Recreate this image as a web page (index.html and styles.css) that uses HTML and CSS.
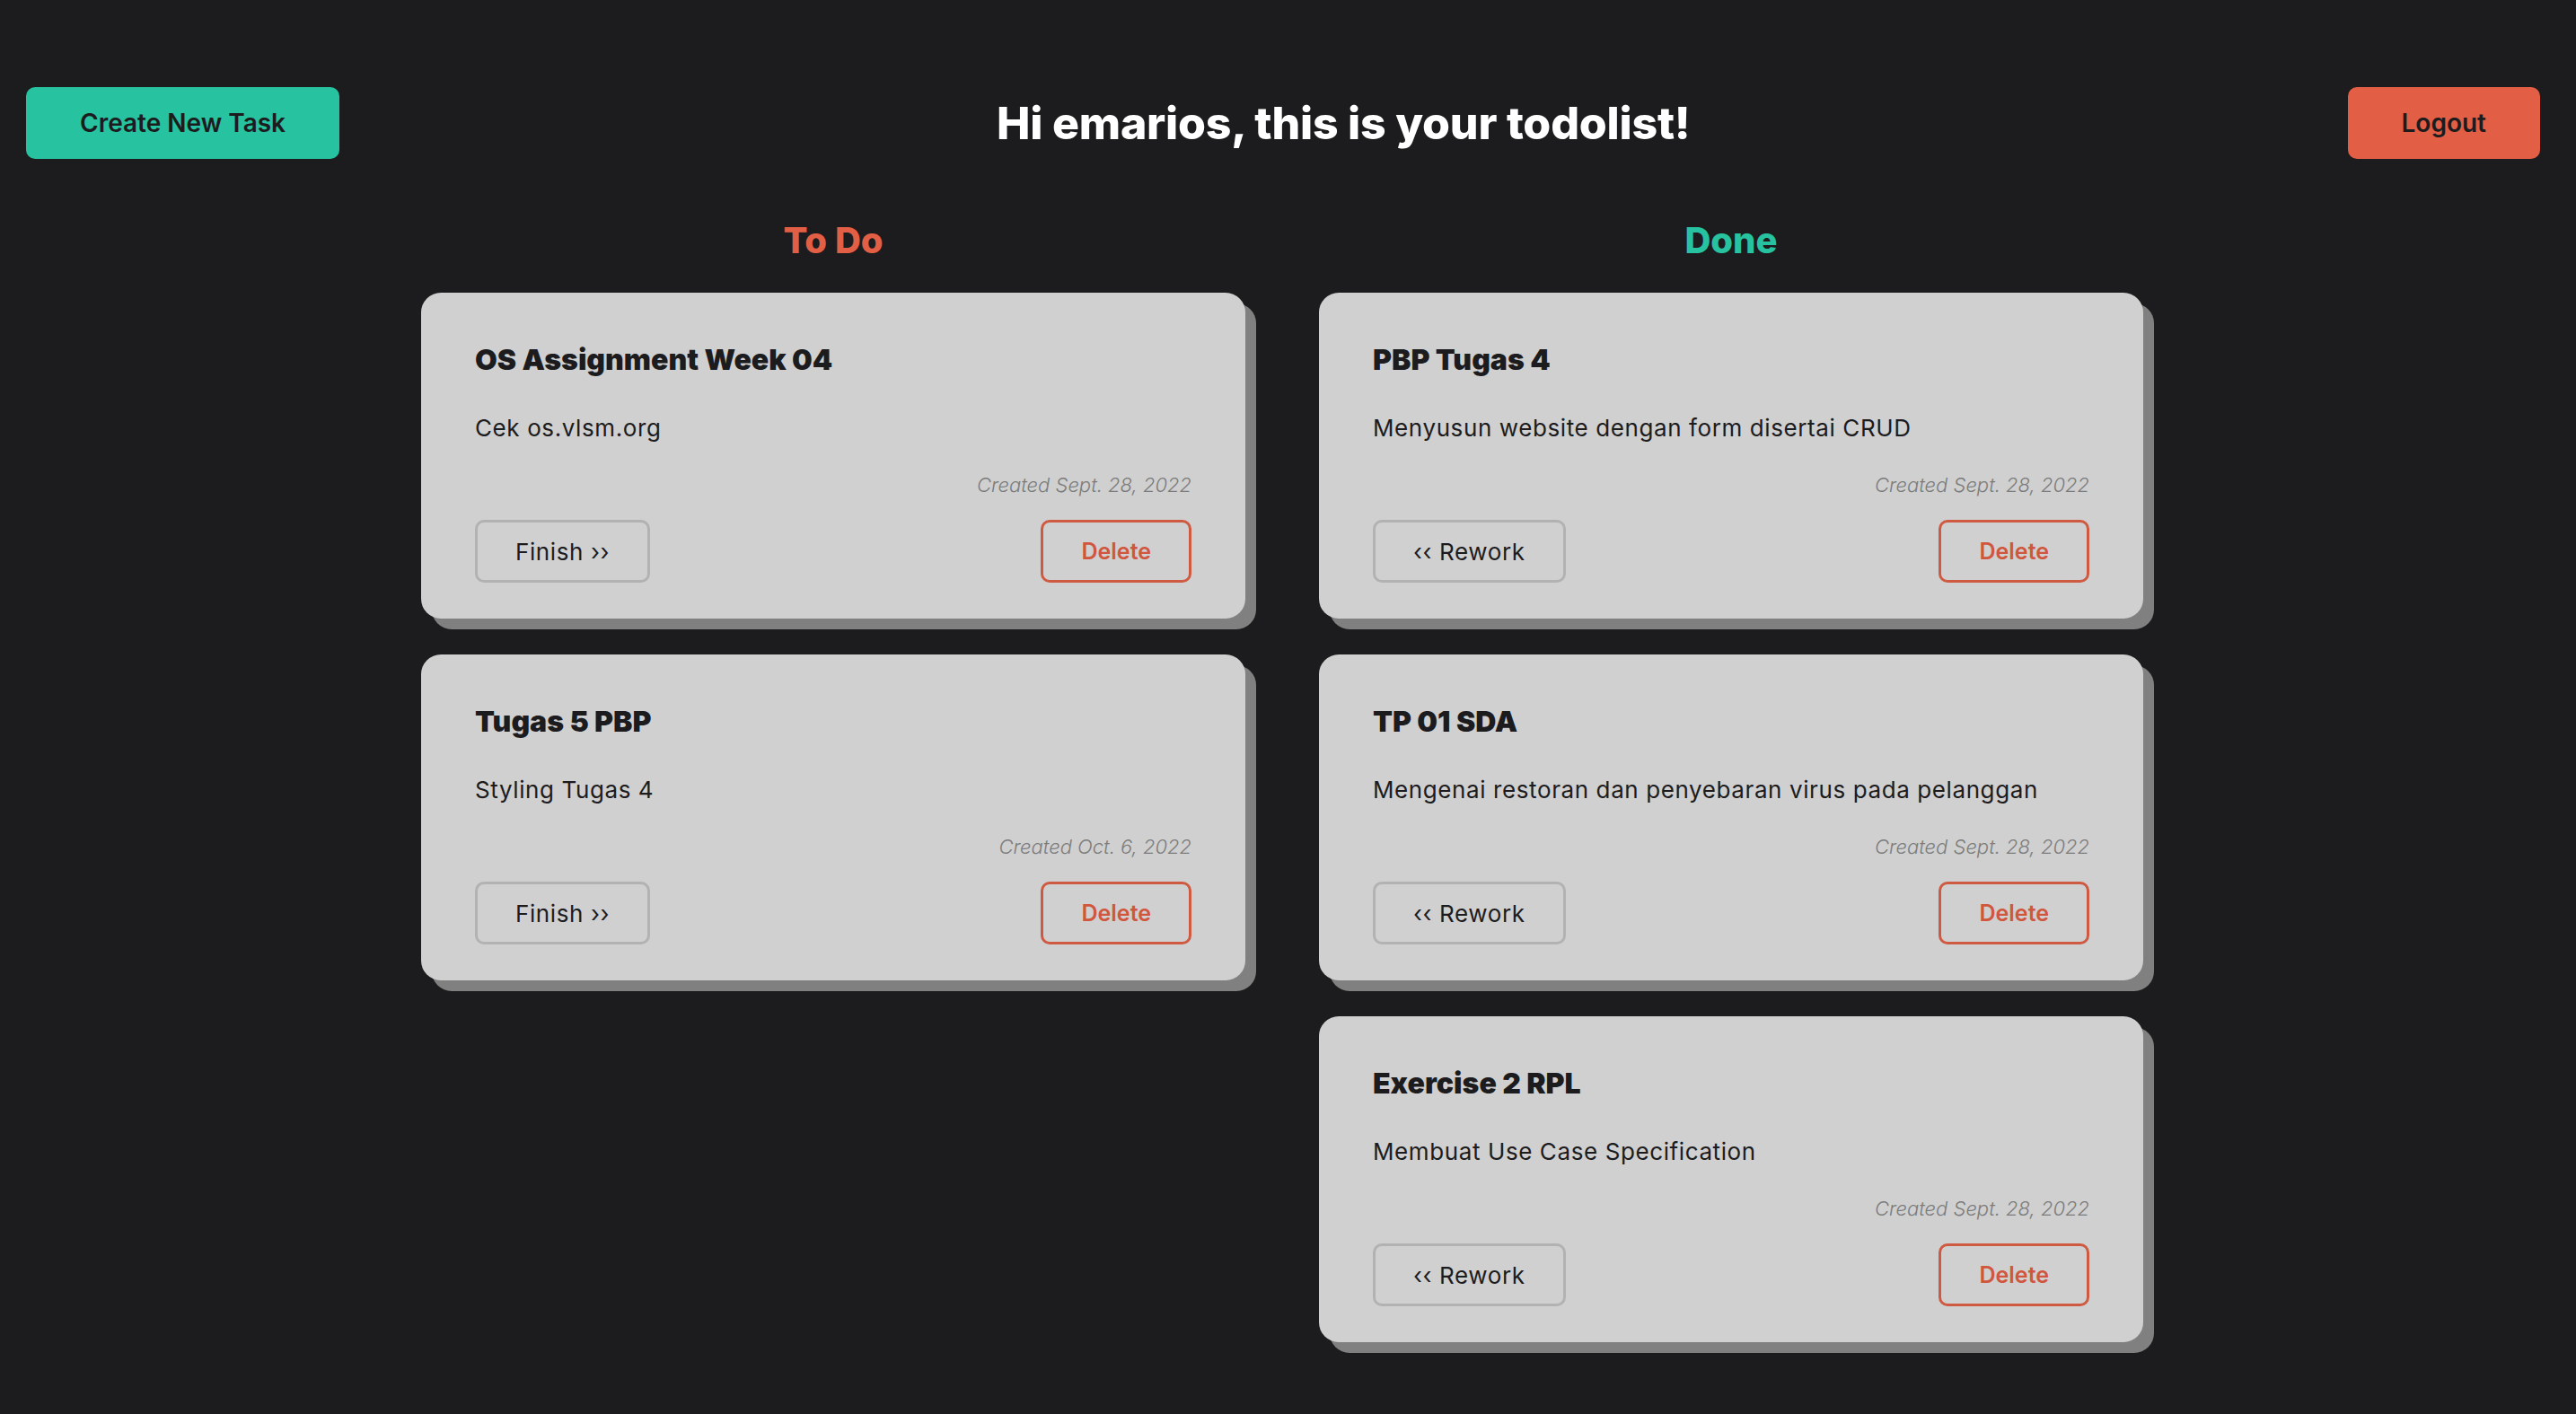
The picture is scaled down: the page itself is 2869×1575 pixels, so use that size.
FILE: index.html
```html
<!DOCTYPE html>
<html lang="en">
<head>
<meta charset="utf-8">
<title>Todolist</title>
<link rel="stylesheet" href="styles.css">
</head>
<body>
<header class="topbar">
  <button class="btn-create">Create New Task</button>
  <h1 class="greeting">Hi emarios, this is your todolist!</h1>
  <button class="btn-logout">Logout</button>
</header>

<main class="board">
  <section class="column">
    <h2 class="col-title todo">To Do</h2>

    <article class="card">
      <h3 class="card-title">OS Assignment Week 04</h3>
      <p class="card-desc">Cek os.vlsm.org</p>
      <p class="card-date">Created Sept. 28, 2022</p>
      <div class="card-actions">
        <button class="btn-move">Finish ››</button>
        <button class="btn-delete">Delete</button>
      </div>
    </article>

    <article class="card">
      <h3 class="card-title">Tugas 5 PBP</h3>
      <p class="card-desc">Styling Tugas 4</p>
      <p class="card-date">Created Oct. 6, 2022</p>
      <div class="card-actions">
        <button class="btn-move">Finish ››</button>
        <button class="btn-delete">Delete</button>
      </div>
    </article>
  </section>

  <section class="column">
    <h2 class="col-title done">Done</h2>

    <article class="card">
      <h3 class="card-title">PBP Tugas 4</h3>
      <p class="card-desc">Menyusun website dengan form disertai CRUD</p>
      <p class="card-date">Created Sept. 28, 2022</p>
      <div class="card-actions">
        <button class="btn-move">‹‹ Rework</button>
        <button class="btn-delete">Delete</button>
      </div>
    </article>

    <article class="card">
      <h3 class="card-title">TP 01 SDA</h3>
      <p class="card-desc">Mengenai restoran dan penyebaran virus pada pelanggan</p>
      <p class="card-date">Created Sept. 28, 2022</p>
      <div class="card-actions">
        <button class="btn-move">‹‹ Rework</button>
        <button class="btn-delete">Delete</button>
      </div>
    </article>

    <article class="card">
      <h3 class="card-title">Exercise 2 RPL</h3>
      <p class="card-desc">Membuat Use Case Specification</p>
      <p class="card-date">Created Sept. 28, 2022</p>
      <div class="card-actions">
        <button class="btn-move">‹‹ Rework</button>
        <button class="btn-delete">Delete</button>
      </div>
    </article>
  </section>
</main>
</body>
</html>
```

FILE: styles.css
```css
* { box-sizing: border-box; }

html, body {
  margin: 0;
  padding: 0;
  background: #1c1c1e;
}

body {
  font-family: Inter, "Noto Sans", "Liberation Sans", sans-serif;
  color: #1c1c1e;
  min-height: 1575px;
}

button {
  font-family: inherit;
  cursor: pointer;
}

.topbar {
  display: flex;
  justify-content: space-between;
  align-items: center;
  padding: 97px 40px 0 29px;
}

.btn-create,
.btn-logout {
  height: 80px;
  padding: 0 60px;
  border: none;
  border-radius: 10px;
  font-size: 28px;
  font-weight: 600;
  color: #1c1c1e;
}

.btn-create { background: #27c3a1; }
.btn-logout { background: #e25e45; }

.greeting {
  margin: 0;
  color: #ffffff;
  font-size: 50px;
  font-weight: 800;
  letter-spacing: -0.2px;
  line-height: 60px;
}

.board {
  display: grid;
  grid-template-columns: 918px 918px;
  column-gap: 82px;
  justify-content: center;
  align-items: start;
  padding-right: 13px;
  margin-top: 67px;
}

.column {
  display: flex;
  flex-direction: column;
}

.col-title {
  margin: 0 0 34px;
  text-align: center;
  font-size: 40px;
  line-height: 48px;
  font-weight: 800;
}

.col-title.todo { color: #e25e45; }
.col-title.done { color: #27c3a1; }

.card {
  background: #d0d0d0;
  border-radius: 22px;
  box-shadow: 12px 12px 0 #808080;
  padding: 55px 60px 40px;
  margin-bottom: 40px;
}

.card-title {
  margin: 0;
  font-size: 32px;
  line-height: 40px;
  font-weight: 900;
  letter-spacing: 0;
  color: #1c1c1e;
}

.card-desc {
  margin: 40px 0 0;
  font-size: 26px;
  line-height: 32px;
  font-weight: 400;
  letter-spacing: 0.6px;
  color: #1c1c1e;
}

.card-date {
  margin: 33px 0 0;
  text-align: right;
  font-size: 22px;
  line-height: 28px;
  font-style: italic;
  font-weight: 300;
  color: #7c7c7c;
}

.card-actions {
  display: flex;
  justify-content: space-between;
  align-items: center;
  margin-top: 25px;
}

.btn-move,
.btn-delete {
  height: 70px;
  padding: 0 42px;
  background: transparent;
  border-radius: 10px;
  font-size: 25px;
}

.btn-move {
  border: 3px solid #b2b2b2;
  color: #1c1c1e;
  font-size: 26px;
  font-weight: 400;
  letter-spacing: 0.6px;
}

.btn-delete {
  border: 3px solid #cf5a42;
  color: #d0573e;
  font-weight: 600;
}
```
